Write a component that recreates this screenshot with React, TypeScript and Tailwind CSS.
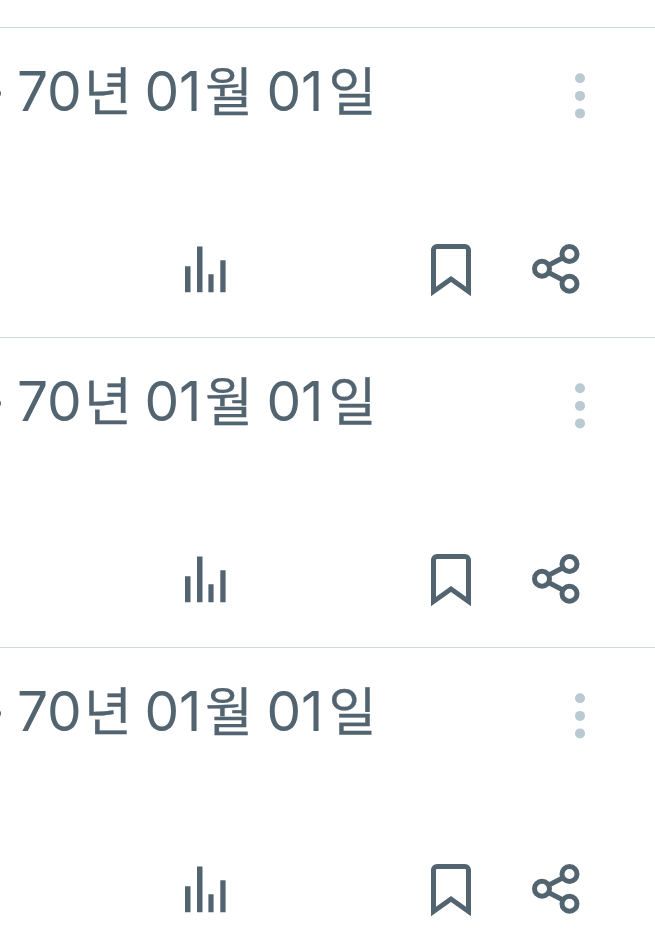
import React from "react";

const digits = "font-['Inter',sans-serif] text-[55px] tracking-[-0.2px]";
const hangul = "font-['Noto_Sans_CJK_KR',sans-serif] text-[52px] [-webkit-text-stroke:0.3px_#536471]";

function PostDate() {
  return (
    <time className="ml-[16px] mt-[29px] flex items-baseline whitespace-pre leading-[64px] text-[#536471]">
      <span className={`w-[67px] ${digits}`}>70</span>
      <span className={`w-[60.5px] ${hangul}`}>년 </span>
      <span className={`w-[60.5px] ${digits}`}>01</span>
      <span className={`w-[61.5px] ${hangul}`}>월 </span>
      <span className={`w-[62px] ${digits}`}>01</span>
      <span className={hangul}>일</span>
    </time>
  );
}

function Post() {
  return (
    <article className="h-[310px] w-full overflow-hidden border-t border-[#cfd9de]">
      <div className="flex h-[130px] items-start">
        <span className="-ml-1.5 mt-[62px] size-[7px] shrink-0 rounded-full bg-[#536471]" />
        <PostDate />
        <svg className="ml-auto mr-[68px] mt-[43px] h-[50px] w-[14px] shrink-0" viewBox="0 0 14 50" fill="#b9cad3">
          <circle cx="7" cy="7.2" r="5" />
          <circle cx="7" cy="24.9" r="5" />
          <circle cx="7" cy="42.4" r="5" />
        </svg>
      </div>
      <div className="mt-[81px] flex pl-[180px] text-[#536471]">
        <svg className="size-[60px]" viewBox="0 0 60 60" fill="currentColor">
          <path d="M5 27.2h5.5v26H5zM17 7.5h5.5v45.7H17zM28.4 35.2h5.2v18h-5.2zM40.3 21.2h5.3v32h-5.3z" />
        </svg>
        <svg className="ml-[181px] size-[60px]" viewBox="0 0 24 24" fill="currentColor">
          <path d="M4 4.5C4 3.12 5.119 2 6.5 2h11C18.881 2 20 3.12 20 4.5v18.44l-8-5.71-8 5.71V4.5zM6.5 4c-.276 0-.5.22-.5.5v14.56l6-4.29 6 4.29V4.5c0-.28-.224-.5-.5-.5h-11z" />
        </svg>
        <svg className="ml-[45px] size-[60px]" viewBox="0 0 60 60" fill="none" stroke="currentColor" strokeWidth="5">
          <path d="M22.5 26.3 37 18.8M22.5 33.5 37 41" />
          <circle cx="16" cy="29.8" r="7.5" />
          <circle cx="43.5" cy="15" r="7.5" />
          <circle cx="43.5" cy="44.8" r="7.5" />
        </svg>
      </div>
    </article>
  );
}

export default function App() {
  return (
    <main className="h-[942px] w-full overflow-hidden bg-white pt-[27px]">
      <Post />
      <Post />
      <Post />
    </main>
  );
}
